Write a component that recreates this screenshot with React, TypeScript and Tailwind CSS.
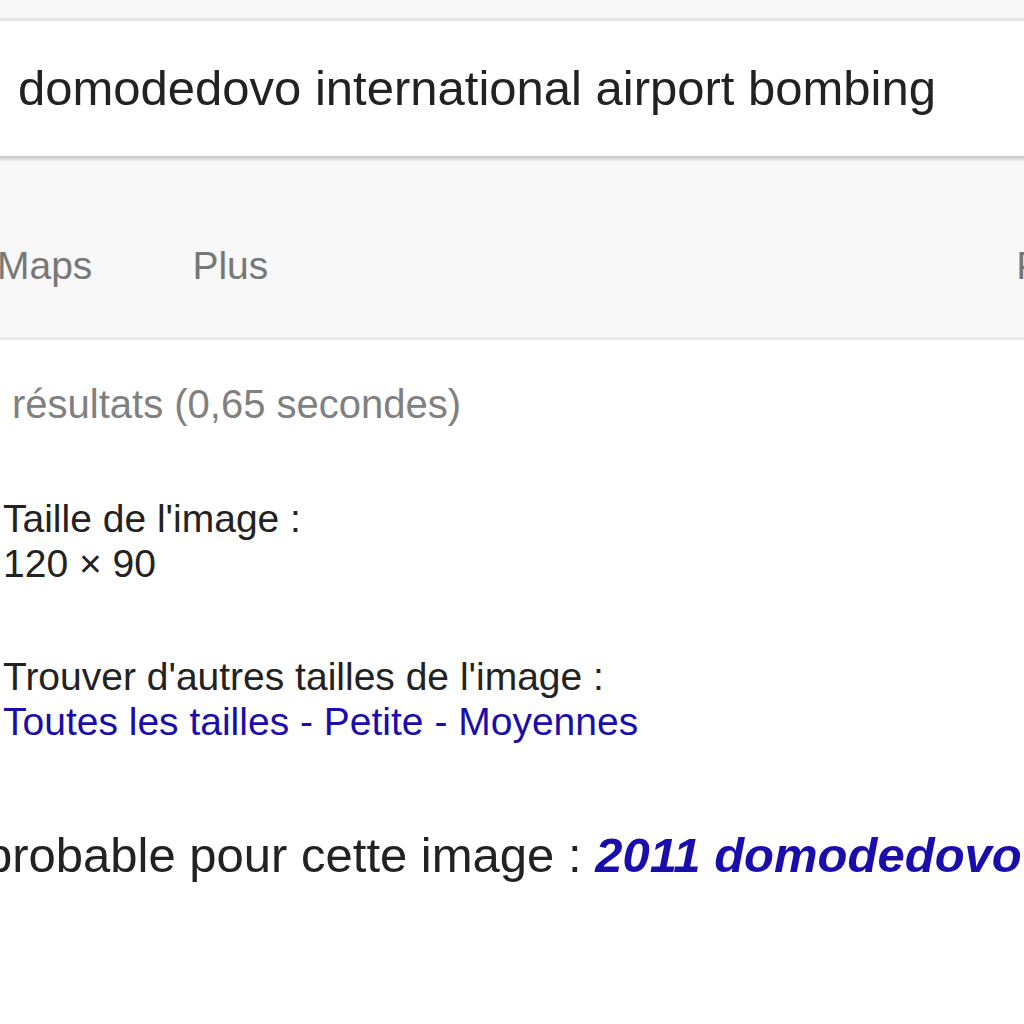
import React from "react";

const navTabs = [
  { label: "Maps", className: "ml-[-3px]" },
  { label: "Plus", className: "ml-[100px]" },
  { label: "Paramètres", className: "ml-[748px]" },
];

export default function App() {
  return (
    <div className="w-[1024px] h-[1024px] overflow-hidden bg-white font-['Liberation_Sans',Arial,sans-serif]">
      {/* top strip */}
      <div className="h-[21px] bg-[#f8f8f8] border-b-[3px] border-[#e6e6e6]" />

      {/* search box */}
      <div className="h-[135px] bg-white flex items-center pl-[18px] whitespace-nowrap">
        <span className="text-[49px] leading-none text-[#222]">
          domodedovo international airport bombing
        </span>
      </div>
      <div className="h-[6px] bg-gradient-to-b from-[#c4c4c4] to-[#f8f8f8]" />

      {/* tabs */}
      <div className="h-[178px] bg-[#f8f8f8] border-b-[3px] border-[#ebebeb] pt-[84px] flex whitespace-nowrap">
        {navTabs.map((tab) => (
          <span key={tab.label} className={`${tab.className} shrink-0 text-[39px] leading-none text-[#777]`}>
            {tab.label}
          </span>
        ))}
      </div>

      {/* results */}
      <div className="pt-[44px] whitespace-nowrap">
        <div className="pl-[12px] text-[40px] leading-none text-[#808080]">
          résultats (0,65 secondes)
        </div>

        <div className="mt-[72px] pl-[3px] text-[39px] leading-[45px] text-[#222]">
          <div>Taille de l'image :</div>
          <div>120 × 90</div>
        </div>

        <div className="mt-[68px] pl-[3px] text-[39px] leading-[45px] text-[#222]">
          <div>Trouver d'autres tailles de l'image :</div>
          <div className="text-[#1a0dab]">
            <a>Toutes les tailles</a> - <a>Petite</a> - <a>Moyennes</a>
          </div>
        </div>

        <div className="mt-[87px] ml-[-15px] text-[49px] leading-none text-[#222]">
          probable pour cette image :{" "}
          <a className="font-bold italic text-[#1a0dab]">2011 domodedovo international airport bombing</a>
        </div>
      </div>
    </div>
  );
}
